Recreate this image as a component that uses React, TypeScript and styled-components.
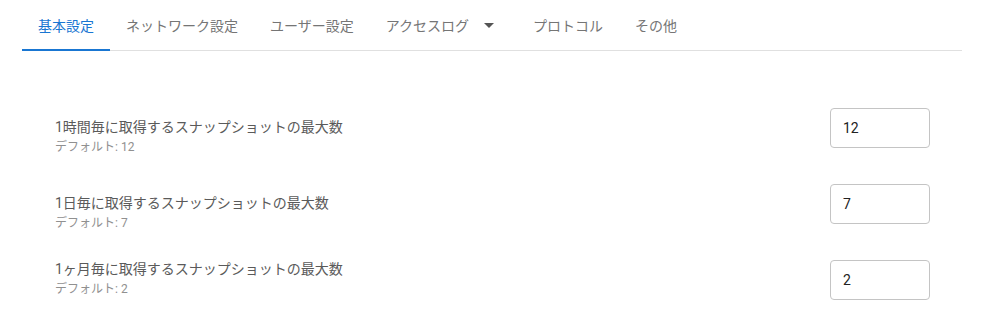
import React from "react";
import styled, { createGlobalStyle } from "styled-components";

const Global = createGlobalStyle`
  html, body { margin: 0; padding: 0; background: #fff; }
  body { font-family: Roboto, "Noto Sans CJK JP", sans-serif; }
`;

const Page = styled.div`
  padding: 0 19px 0 22px;
`;

const TabBar = styled.div`
  display: flex;
  height: 50px;
  border-bottom: 1px solid #e0e0e0;
`;

const Tab = styled.div<{ $active?: boolean }>`
  position: relative;
  display: flex;
  align-items: center;
  padding: 0 16px;
  font-size: 14px;
  color: ${(p) => (p.$active ? "#1976d2" : "#757575")};
  white-space: nowrap;
  &::after {
    content: "";
    display: ${(p) => (p.$active ? "block" : "none")};
    position: absolute;
    left: 0;
    right: 0;
    bottom: -1px;
    height: 2px;
    background: #1976d2;
  }
`;

const Caret = styled.svg`
  width: 24px;
  height: 24px;
  margin-left: 8px;
  fill: #555;
`;

const Content = styled.div`
  display: flex;
  flex-direction: column;
  gap: 36px;
  padding: 57px 32px 0 33px;
`;

const Row = styled.div`
  display: flex;
  justify-content: space-between;
  align-items: flex-start;
  height: 40px;
`;

const LabelBlock = styled.div<{ $offset: number }>`
  margin-top: ${(p) => p.$offset}px;
  display: flex;
  flex-direction: column;
`;

const Label = styled.div`
  font-size: 14px;
  line-height: 20px;
  color: #5a5a5a;
`;

const Hint = styled.div`
  font-size: 12px;
  line-height: 20px;
  color: #909090;
`;

const NumberInput = styled.input`
  box-sizing: border-box;
  width: 100px;
  height: 40px;
  border: 1px solid #c4c4c4;
  border-radius: 4px;
  padding: 0 12px;
  font-family: Roboto, sans-serif;
  font-size: 14px;
  color: #222;
  outline: none;
`;

const tabs = ["基本設定", "ネットワーク設定", "ユーザー設定", "アクセスログ", "プロトコル", "その他"];

const rows = [
  { label: "1時間毎に取得するスナップショットの最大数", def: "12", offset: 9 },
  { label: "1日毎に取得するスナップショットの最大数", def: "7", offset: 9 },
  { label: "1ヶ月毎に取得するスナップショットの最大数", def: "2", offset: -1 },
];

export default function App() {
  return (
    <Page>
      <Global />
      <TabBar>
        {tabs.map((t, i) => (
          <Tab key={t} $active={i === 0}>
            {t}
            {t === "アクセスログ" && (
              <Caret viewBox="0 0 24 24">
                <path d="M7 10l5 5 5-5z" />
              </Caret>
            )}
          </Tab>
        ))}
      </TabBar>
      <Content>
        {rows.map((r) => (
          <Row key={r.label}>
            <LabelBlock $offset={r.offset}>
              <Label>{r.label}</Label>
              <Hint>デフォルト: {r.def}</Hint>
            </LabelBlock>
            <NumberInput type="text" defaultValue={r.def} />
          </Row>
        ))}
      </Content>
    </Page>
  );
}
